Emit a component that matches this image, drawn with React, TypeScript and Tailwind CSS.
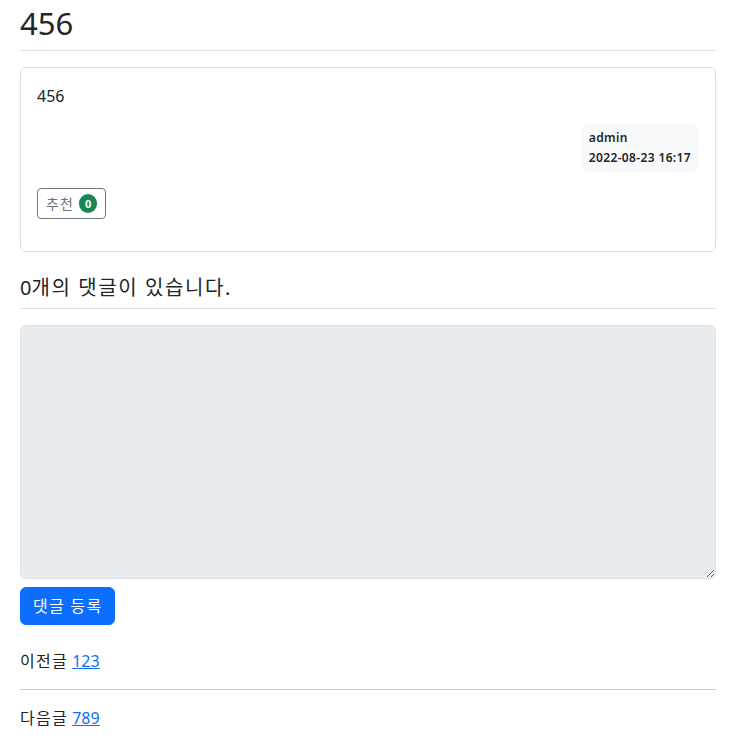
export default function App() {
  const font = { fontFamily: '"Noto Sans", "Noto Sans CJK KR", sans-serif' };
  return (
    <div className="bg-white text-[#212529] text-[16px] leading-[24px] min-h-[740px]" style={font}>
      <div className="ml-[8px] w-[720px] px-[12px]">
        <h2 className="pt-[4px] pb-[8px] border-b border-[#dee2e6] text-[31px] leading-[38px] font-normal">456</h2>
        <div className="mt-[16px] border border-[#dfdfdf] rounded-[6px] p-[16px]">
          <div>456</div>
          <div className="flex justify-end mt-[16px]">
            <div className="bg-[#f8f9fa] rounded-[6px] p-[8px] text-[12px] leading-[12px] font-semibold text-[#212529] tracking-[0.03em]">
              <div className="mb-[8px]">admin</div>
              <div>2022-08-23 16:17</div>
            </div>
          </div>
          <div className="my-[16px]">
            <button className="inline-flex items-center h-[31px] gap-[5px] border border-[#6c757d] text-[#6c757d] rounded-[4px] px-[8px] text-[14px] leading-[21px]">
              <span className="tracking-[0.08em]">추천</span>
              <span className="bg-[#198754] text-white rounded-full text-[11px] leading-[11px] font-bold px-[6px] py-[4px]">0</span>
            </button>
          </div>
        </div>
        <h5 className="mt-[16px] py-[8px] border-b border-[#dee2e6] text-[20px] leading-[24px] font-normal">
          0<span className="tracking-[0.08em]">개의 댓글이 있습니다.</span>
        </h5>
        <div className="mt-[16px]">
          <textarea
            disabled
            rows={10}
            className="block w-full h-[254px] bg-[#e9ecef] border border-[#dee2e6] rounded-[6px] px-[12px] py-[6px] resize-y"
          />
          <button className="mt-[8px] bg-[#0d6efd] text-white rounded-[6px] px-[12px] py-[6px] text-[16px] leading-[24px] border border-[#0d6efd] tracking-[0.08em]">댓글 등록</button>
        </div>
        <div className="mt-[24px]">
          <div>
            <span className="tracking-[0.08em]">이전글</span> <a href="#" className="text-[#0d6efd] underline">123</a>
          </div>
          <hr className="my-[16px] border-t border-[#c8c9ca]" />
          <div>
            <span className="tracking-[0.08em]">다음글</span> <a href="#" className="text-[#0d6efd] underline">789</a>
          </div>
        </div>
      </div>
    </div>
  );
}
